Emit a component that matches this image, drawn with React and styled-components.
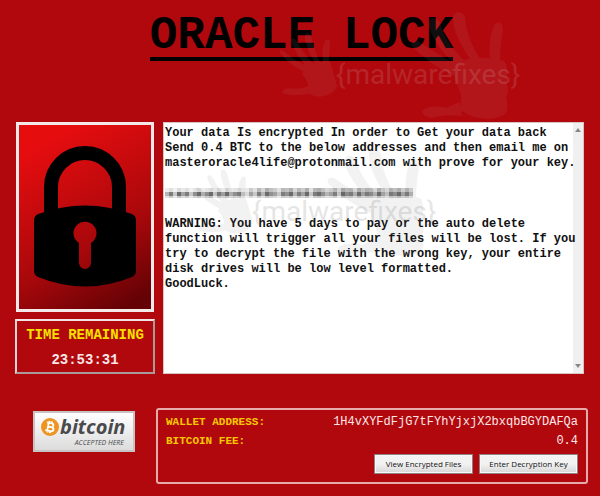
import React from "react";
import styled, { createGlobalStyle } from "styled-components";

const mono = '"Liberation Mono", "Courier New", monospace';

const GlobalStyle = createGlobalStyle`
  * { box-sizing: border-box; }
  html, body { margin: 0; background: #b1080d; }
`;

const Page = styled.main`
  position: relative;
  display: flex;
  flex-direction: column;
  min-height: 100vh;
  padding: 15px 12px 12px 15px;
  background: #b1080d;
  font-family: ${mono};
`;

const Title = styled.h1`
  align-self: center;
  margin: 0;
  border-bottom: 4px solid #000;
  font-size: 46px;
  font-weight: 700;
  line-height: 42px;
  color: #000;
`;

const Columns = styled.div`
  display: grid;
  grid-template-columns: 140px 1fr;
  gap: 8px;
  margin-top: 61px;
  padding-right: 4px;
`;

const Side = styled.aside`
  display: flex;
  flex-direction: column;
  gap: 7px;
`;

const LockFrame = styled.div`
  display: flex;
  align-items: center;
  justify-content: center;
  height: 190px;
  margin: 0 1px;
  border: 3px solid #f4e8e8;
  background: linear-gradient(150deg, #e60d0f 12%, #a8080b 62%, #640205 94%);
`;

const TimeBox = styled.section`
  display: flex;
  flex-direction: column;
  gap: 9px;
  height: 55px;
  padding-top: 6px;
  border: 2px solid;
  border-color: #f2e4e4 #a99 #a99 #e8d4d4;
  text-align: center;
  font-size: 14px;
  font-weight: 700;
  line-height: 16px;
`;

const TimeLabel = styled.span`
  color: #f5e000;
`;

const TimeValue = styled.time`
  color: #f6e6e6;
`;

const NoteBox = styled.section`
  display: grid;
  grid-template-columns: 1fr 10px;
  border: 1px solid #d9c4c4;
  background: #fff;
`;

const NoteText = styled.div`
  z-index: 1;
  display: flex;
  flex-direction: column;
  padding: 3px 0 0 1px;
  min-width: 0;
  white-space: pre;
  font-size: 12px;
  font-weight: 700;
  line-height: 15px;
  color: #111;
`;

const Paragraph = styled.p`
  margin: 0;
`;

const Scrollbar = styled.div`
  display: flex;
  flex-direction: column;
  justify-content: space-between;
  align-items: center;
  padding: 5px 0;
  background: #f0f0f0;
`;

const Footer = styled.div`
  display: grid;
  grid-template-columns: 133px 1fr;
  gap: 8px;
  margin-top: 34px;
`;

const Badge = styled.div`
  display: flex;
  flex-direction: column;
  justify-self: end;
  width: 102px;
  height: 41px;
  margin: 3px 13px 0 0;
  padding: 3px 6px;
  border: 2px solid #c9c4c4;
  background: linear-gradient(#fff, #dcdcdc);
  font-family: "Open Sans", sans-serif;
  font-style: italic;
  color: #4a4a4c;
`;

const BadgeBrand = styled.div`
  display: flex;
  align-items: center;
  gap: 1px;
  font-size: 20px;
  font-weight: 700;
  line-height: 22px;
`;

const BadgeCaption = styled.span`
  align-self: flex-end;
  margin-right: 3px;
  font-size: 7px;
  line-height: 9px;
`;

const Wallet = styled.section`
  padding: 3px 8px 8px;
  border: 2px solid #e6aaaa;
  border-radius: 3px;
`;

const Details = styled.dl`
  display: grid;
  grid-template-columns: auto 1fr;
  margin: 0;
  font-size: 11px;
  line-height: 19px;
`;

const Term = styled.dt`
  font-weight: 700;
  color: #f5c800;
`;

const Value = styled.dd`
  margin: 0;
  text-align: right;
  font-size: 12px;
  color: #fbe6e6;
`;

const Actions = styled.div`
  display: flex;
  justify-content: flex-end;
  gap: 6px;
  margin-top: 3px;
`;

const Button = styled.button`
  width: 99px;
  height: 20px;
  padding: 0;
  border: 1px solid #8e8080;
  background: linear-gradient(#f2f2f2 50%, #d6d6d6);
  box-shadow: inset 0 0 0 1px #f8f8f8;
  font-family: "Open Sans", sans-serif;
  font-size: 8px;
  line-height: 16px;
  color: #111;
`;

const Watermark = styled.div`
  position: absolute;
  z-index: 2;
  left: ${(p) => p.$x}px;
  top: ${(p) => p.$y}px;
  width: 260px;
  height: 110px;
  color: ${(p) => p.$ink};
  pointer-events: none;
`;

const WatermarkText = styled.span`
  position: absolute;
  left: 60px;
  top: 49px;
  opacity: 0.15;
  font-family: Roboto, sans-serif;
  font-size: 28px;
  line-height: 32px;
`;

function Padlock() {
  return (
    <svg width="104" height="144" viewBox="0 0 104 144" role="img" aria-label="Padlock">
      <path d="M18 74V42a34 34 0 0 1 68 0v32" fill="none" stroke="#000" strokeWidth="14" />
      <path
        fillRule="evenodd"
        d="M5 69Q52 52 99 69Q103 71 103 75V126Q103 130 99 132Q52 151 5 132Q1 130 1 126V75Q1 71 5 69ZM46 98V118a6 6 0 0 0 12 0V98a11.500 11.500 0 1 0-12 0Z"
      />
    </svg>
  );
}

const redacted = [
  4, 7, 3, 8, 5, 7, 3, 6, 8, 4, 6, 8, 3, 7, 5, 8, 4, 6, 7, 3, 2, 5, 3, 7, 4, 8, 6, 5, 3, 7, 6,
  8, 4, 7, 5, 8, 3, 7, 8, 6, 4, 5, 7, 3, 8, 6, 7, 4, 8, 5, 7, 6, 4, 8, 5, 3, 7, 6, 8, 5, 7, 4,
];

function RedactedLine() {
  return (
    <svg width="250" height="46" viewBox="0 0 250 46" role="img" aria-label="Redacted address">
      <g fill="#333" shapeRendering="crispEdges">
        {redacted.map((n, i) => (
          <g key={i}>
            <rect x={i * 4} y="17" width="4" height="4" opacity={i > 19 ? n / 20 : n / 45} />
            <rect x={i * 4} y="21" width="4" height="4" opacity={n / 11} />
            <rect x={i * 4} y="25" width="4" height="2" opacity={n / 28} />
          </g>
        ))}
      </g>
    </svg>
  );
}

function Arrow({ up }) {
  return (
    <svg width="6" height="4" viewBox="0 0 6 4" aria-hidden="true">
      <path d={up ? "M0 4L3 0L6 4Z" : "M0 0L3 4L6 0Z"} fill="#888" />
    </svg>
  );
}

const Coin = styled.svg`
  flex: none;
`;

function BitcoinMark() {
  return (
    <Coin width="18" height="18" viewBox="0 0 18 18" aria-hidden="true">
      <circle cx="9" cy="9" r="9" fill="#ee9420" />
      <g fill="none" stroke="#fff" strokeWidth="1.800" transform="rotate(12 9 9)">
        <path d="M5 5H10Q12 5 12 7T10 9H7M10 9Q13 9 13 11T10 13H5M7 5V13M7.500 3V5M10 3V5M7.500 13V15M10 13V15" />
      </g>
    </Coin>
  );
}

function Hands() {
  return (
    <svg width="260" height="110" viewBox="0 0 260 110" aria-hidden="true">
      <g fill="currentColor" opacity="0.070">
        <path d="M30 56Q44 50 54 52Q58 64 61 76Q58 84 48 86Q38 88 32 82Q34 72 26 64Z" />
        <path d="M30 63Q12 54 4 43Q3 38 9 42Q20 52 34 57Z" />
        <path d="M31 57Q18 42 15 30Q17 26 21 31Q27 44 38 54Z" />
        <path d="M39 53Q28 34 29 24Q32 20 35 26Q38 40 44 52Z" />
        <path d="M47 52Q45 36 50 30Q54 28 54 34Q53 44 53 54Z" />
        <path d="M33 84Q20 86 8 84Q4 80 12 78Q24 80 33 76Z" />
        <path d="M182 52Q204 44 228 51Q233 56 230 72Q234 80 230 88Q234 102 226 106Q206 114 184 100Q188 86 180 72Q176 58 182 52Z" />
        <path d="M178 66Q150 52 136 36Q134 30 142 31Q160 44 184 56Z" />
        <path d="M180 56Q156 32 152 14Q156 4 164 12Q168 32 190 52Z" />
        <path d="M194 49Q176 22 177 6Q183 -2 189 7Q190 28 204 49Z" />
        <path d="M214 50Q212 26 219 14Q226 9 227 20Q224 38 224 51Z" />
        <path d="M186 106Q168 104 156 108Q146 106 146 101Q154 94 170 98L184 92Z" />
      </g>
    </svg>
  );
}

function Brand(props) {
  return (
    <Watermark {...props} aria-hidden="true">
      <Hands />
      <WatermarkText>{"{malwarefixes}"}</WatermarkText>
    </Watermark>
  );
}

export default function App() {
  return (
    <Page>
      <GlobalStyle />
      <Title>ORACLE LOCK</Title>
      <Columns>
        <Side>
          <LockFrame>
            <Padlock />
          </LockFrame>
          <TimeBox>
            <TimeLabel>TIME REMAINING</TimeLabel>
            <TimeValue>23:53:31</TimeValue>
          </TimeBox>
        </Side>
        <NoteBox>
          <NoteText>
            <Paragraph>
              {"Your data Is encrypted In order to Get your data back\nSend 0.4 BTC to the below addresses and then email me on\nmasteroracle4life@protonmail.com with prove for your key."}
            </Paragraph>
            <RedactedLine />
            <Paragraph>
              {"WARNING: You have 5 days to pay or the auto delete\nfunction will trigger all your files will be lost. If you\ntry to decrypt the file with the wrong key, your entire\ndisk drives will be low level formatted.\nGoodLuck."}
            </Paragraph>
          </NoteText>
          <Scrollbar>
            <Arrow up />
            <Arrow />
          </Scrollbar>
        </NoteBox>
      </Columns>
      <Footer>
        <Badge>
          <BadgeBrand>
            <BitcoinMark />
            bitcoin
          </BadgeBrand>
          <BadgeCaption>ACCEPTED HERE</BadgeCaption>
        </Badge>
        <Wallet>
          <Details>
            <Term>WALLET ADDRESS:</Term>
            <Value>1H4vXYFdFjG7tFYhYjxjX2bxqbBGYDAFQa</Value>
            <Term>BITCOIN FEE:</Term>
            <Value>0.4</Value>
          </Details>
          <Actions>
            <Button type="button">View Encrypted Files</Button>
            <Button type="button">Enter Decryption Key</Button>
          </Actions>
        </Wallet>
      </Footer>
      <Brand $x={276} $y={10} $ink="#d8c8c8" />
      <Brand $x={192} $y={147} $ink="#555" />
    </Page>
  );
}
